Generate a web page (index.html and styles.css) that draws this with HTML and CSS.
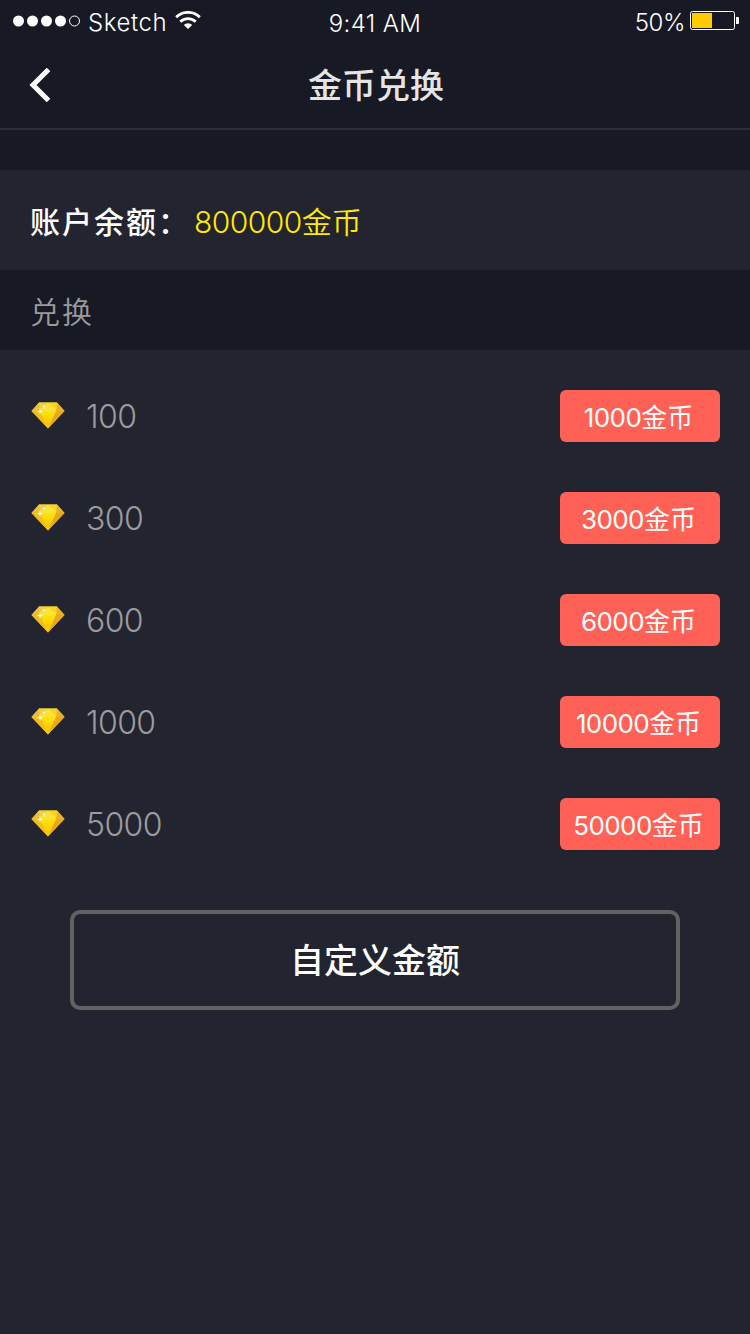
FILE: index.html
```html
<!DOCTYPE html>
<html lang="zh-CN">
<head>
<meta charset="utf-8">
<title>金币兑换</title>
<link rel="stylesheet" href="styles.css">
</head>
<body>
<svg class="defs" aria-hidden="true">
  <defs>
    <linearGradient id="gem-center" x1="0" y1="0" x2="0" y2="1">
      <stop offset="0" stop-color="#ffe60a"/><stop offset="1" stop-color="#ffc000"/>
    </linearGradient>
    <symbol id="gem" viewBox="0 0 34 27">
      <path fill="#f3c321" d="M8 .5h18L33.500 9 17 26.500.5 9z"/>
      <path fill="#f3d040" d="M8 .5h9L8.500 8z"/>
      <path fill="#f5d52c" d="M17 .5h9L25.500 8z"/>
      <path fill="#fbe434" d="M17 .5 25.500 8 17 10.500 8.500 8z"/>
      <path fill="#edbd3a" d="M8 .5 8.500 8 .5 9z"/>
      <path fill="#e8b32c" d="M26 .5 33.500 9 25.500 8z"/>
      <path fill="#f2bb20" d="M.5 9 8.500 8 17 26.500z"/>
      <path fill="url(#gem-center)" d="M8.500 8 17 10.500 25.500 8 17 26.500z"/>
      <path fill="#e8a81e" d="M25.500 8l8 1L17 26.500z"/>
      <path fill="#fff" d="M9 6l.8 2.700 2.700.8-2.700.8L9 13l-.8-2.700-2.700-.8 2.700-.8zM13 2.500l.5 1.500 1.500.5-1.500.5-.5 1.500-.5-1.500-1.500-.5 1.500-.5z"/>
    </symbol>
  </defs>
</svg>
<main class="screen">
  <header class="top">
    <div class="status">
      <div class="status-left">
        <svg class="signal" viewBox="0 0 68 12"><g fill="#fff"><circle cx="5.500" cy="6" r="5.500"/><circle cx="19.500" cy="6" r="5.500"/><circle cx="33.500" cy="6" r="5.500"/><circle cx="47.500" cy="6" r="5.500"/></g><circle cx="61.500" cy="6" r="5" fill="none" stroke="#fff"/></svg>
        <span class="carrier">Sketch</span>
        <svg class="wifi" viewBox="0 0 26 18"><g fill="none" stroke="#fff" stroke-width="2.900"><path d="M1.200 6.300a16.700 16.700 0 0 1 23.600 0"/><path d="M5.300 10.800a10.900 10.900 0 0 1 15.400 0"/></g><path fill="#fff" d="M13 18l-4.200-4a6 6 0 0 1 8.400 0z"/></svg>
      </div>
      <span class="time">9:41 AM</span>
      <div class="status-right">
        <span class="percent">50%</span>
        <svg class="battery" viewBox="0 0 49 19"><rect x=".5" y=".5" width="44" height="18" rx="2" fill="none" stroke="#fff"/><path fill="#fc0" d="M2 2h20v15H2z"/><path fill="#fff" d="M46 6h2q1 0 1 1v5q0 1-1 1h-2z"/></svg>
      </div>
    </div>
    <nav class="nav">
      <svg class="back" viewBox="0 0 22 34"><path d="M19.500 1.500 4 17l15.500 15.500" fill="none" stroke="#fff" stroke-width="5"/></svg>
      <h1 class="title">金币兑换</h1>
    </nav>
  </header>
  <section class="balance"><span class="balance-label">账户余额：</span><span class="balance-value"><span class="digits">800000</span>金币</span></section>
  <h2 class="section-title">兑换</h2>
  <section class="exchange">
    <ul class="list">
      <li class="row"><svg class="gem"><use href="#gem"/></svg><span class="amount">100</span><button class="price"><span>1000</span>金币</button></li>
      <li class="row"><svg class="gem"><use href="#gem"/></svg><span class="amount">300</span><button class="price"><span>3000</span>金币</button></li>
      <li class="row"><svg class="gem"><use href="#gem"/></svg><span class="amount">600</span><button class="price"><span>6000</span>金币</button></li>
      <li class="row"><svg class="gem"><use href="#gem"/></svg><span class="amount">1000</span><button class="price"><span>10000</span>金币</button></li>
      <li class="row"><svg class="gem"><use href="#gem"/></svg><span class="amount">5000</span><button class="price"><span>50000</span>金币</button></li>
    </ul>
    <button class="custom">自定义金额</button>
  </section>
</main>
</body>
</html>
```
FILE: styles.css
```css
* { box-sizing: border-box; }
body { margin: 0; background: #22242f; font-family: Inter, "Noto Sans CJK SC", sans-serif; color: #fff; }
button { font-family: inherit; color: inherit; padding: 0; }
.defs { position: absolute; width: 0; height: 0; }
.screen { display: flex; flex-direction: column; min-height: 1334px; background: #22242f; }
.top { height: 170px; background: #171924; }
.status { display: grid; grid-template-columns: 1fr auto 1fr; height: 40px; padding: 0 11px 0 13px; font-size: 24px; line-height: 46px; font-weight: 350; }
.status-left, .status-right { display: flex; align-items: flex-start; }
.status-right { justify-content: flex-end; }
.signal { width: 68px; height: 12px; margin-top: 15px; }
.carrier { width: 79px; margin-left: 7px; letter-spacing: .6px; }
.wifi { width: 26px; height: 18px; margin: 11px 0 0 8px; }
.time { padding-right: 2px; line-height: 48px; font-size: 24px; letter-spacing: .4px; }
.percent { letter-spacing: -.4px; }
.battery { width: 49px; height: 19px; margin: 11px 0 0 5px; }
.nav { display: grid; grid-template-columns: 50px 1fr 50px; align-items: center; height: 90px; border-bottom: 2px solid #2b2d38; }
.back { width: 22px; height: 34px; margin: 2px 0 0 29px; }
.title { margin: 0; padding: 3px 0 0 2px; text-align: center; font-size: 34px; line-height: 50px; font-weight: 500; color: #e5e5e5; }
.balance { display: flex; align-items: center; height: 100px; padding: 0 30px 1px; font-size: 30px; }
.balance-label { width: 164px; letter-spacing: 2px; font-weight: 500; white-space: nowrap; }
.balance-value { color: #ffea00; font-weight: 350; }
.digits { letter-spacing: -.55px; }
.section-title { margin: 0; height: 80px; padding: 0 30px; background: #171924; font-size: 30px; font-weight: 350; line-height: 84px; letter-spacing: 2px; color: #9b9b9b; }
.exchange { display: flex; flex-direction: column; padding: 40px 30px; }
.list { display: flex; flex-direction: column; gap: 50px; margin: 0; padding: 0; list-style: none; }
.row { display: flex; align-items: center; height: 52px; }
.gem { width: 34px; height: 27px; margin: 0 21px 2px 1px; }
.amount { flex: 1; padding-top: 2px; font-size: 32px; font-weight: 350; line-height: 54px; color: #9b9b9f; letter-spacing: -.6px; }
.price { width: 160px; height: 52px; padding: 3px 3px 0 0; border: 0; border-radius: 6px; background: #ff6157; font-size: 26px; line-height: 50px; }
.price span { letter-spacing: -.6px; }
.custom { height: 100px; margin: 60px 40px 0; padding-bottom: 3px; border: 4px solid #626262; border-radius: 10px; background: transparent; font-size: 34px; font-weight: 500; }
```
